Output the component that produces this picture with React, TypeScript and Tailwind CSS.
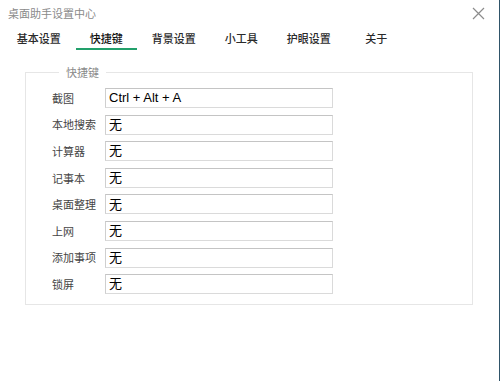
import React from "react";

const tabs = ["基本设置", "快捷键", "背景设置", "小工具", "护眼设置", "关于"];

const shortcuts = [
  { label: "截图", value: "Ctrl + Alt + A" },
  { label: "本地搜索", value: "无" },
  { label: "计算器", value: "无" },
  { label: "记事本", value: "无" },
  { label: "桌面整理", value: "无" },
  { label: "上网", value: "无" },
  { label: "添加事项", value: "无" },
  { label: "锁屏", value: "无" },
];

const App: React.FC = () => {
  return (
    <div className="w-[500px] h-[381px] bg-white border-r border-[#2f5369] font-['Noto_Sans_CJK_SC',sans-serif] overflow-hidden">
      <div className="flex items-center justify-between h-[26px] pl-[8px] pr-[14px]">
        <span className="text-[11px] text-[#8a8a8a] leading-none">桌面助手设置中心</span>
        <svg width="13" height="13" viewBox="0 0 13 13" className="text-[#8c8c8c]">
          <path d="M1 1L12 12M12 1L1 12" stroke="currentColor" strokeWidth="1.2" />
        </svg>
      </div>

      <div className="flex pl-[5px]">
        {tabs.map((t, i) => (
          <div key={t} className="w-[67.5px] flex flex-col items-center pt-[4px]">
            <span
              className={`text-[11px] leading-[16px] font-medium ${
                i === 1 ? "text-[#111]" : "text-[#2a2a2a]"
              }`}
            >
              {t}
            </span>
            <div className={`mt-[2px] h-[2px] w-[61px] ${i === 1 ? "bg-[#22a06b]" : "bg-transparent"}`} />
          </div>
        ))}
      </div>

      <fieldset className="mt-[15px] ml-[25px] w-[448px] border border-[#e6e6e6] pl-[26px] pt-[9px] pb-[10px]">
        <legend className="ml-[7px] px-[7px] text-[11px] leading-[14px] text-[#8a8a8a]">快捷键</legend>
        <div className="flex flex-col gap-[6.6px]">
          {shortcuts.map((s) => (
            <div key={s.label} className="flex items-center">
              <span className="w-[53px] text-[11px] text-[#444]">{s.label}</span>
              <div className="w-[228px] h-[20px] flex items-center px-[3px] border border-[#dadada] border-t-[#c4c4c4] border-l-[#cfcfcf] text-[13px] text-black font-['Liberation_Sans','Noto_Sans_CJK_SC',sans-serif]">
                {s.value}
              </div>
            </div>
          ))}
        </div>
      </fieldset>
    </div>
  );
};

export default App;
